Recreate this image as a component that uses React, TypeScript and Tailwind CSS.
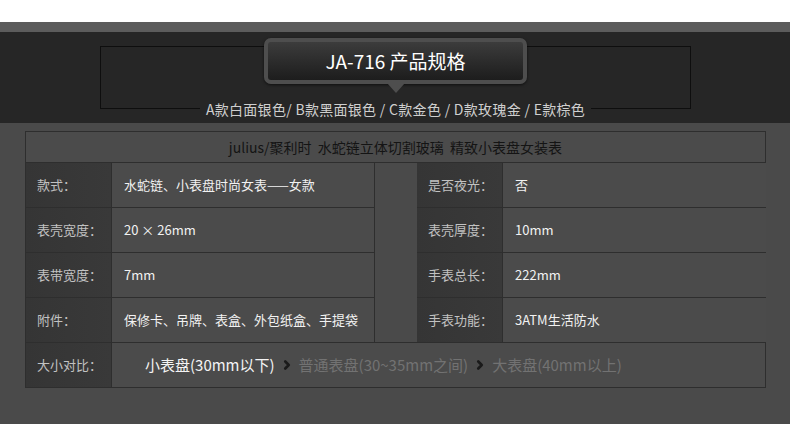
import React from "react";
import { ChevronRight } from "lucide-react";

const rows = [
  ["款式：", "水蛇链、小表盘时尚女表——女款", "是否夜光：", "否"],
  ["表壳宽度：", "20 × 26mm", "表壳厚度：", "10mm"],
  ["表带宽度：", "7mm", "手表总长：", "222mm"],
  ["附件：", "保修卡、吊牌、表盒、外包纸盒、手提袋", "手表功能：", "3ATM生活防水"],
];

function Label({ text }: { text: string }) {
  return (
    <div className="h-[45px] flex items-center pl-[11px] bg-gradient-to-r from-[#353535] to-[#393939] border-b border-r border-[#2e2e2e] text-[13px] text-[#c2c2c2]">
      {text}
    </div>
  );
}

function Value({ text }: { text: string }) {
  return (
    <div className="h-[45px] flex items-center pl-[12px] bg-[#4b4b4b] border-b border-r border-[#2e2e2e] text-[13px] text-[#f2f2f2]">
      {text}
    </div>
  );
}

export default function App() {
  return (
    <div
      className="w-[790px] h-[424px] overflow-hidden bg-white"
      style={{ fontFamily: '"Noto Sans CJK SC", "Noto Sans", sans-serif' }}
    >
      <div className="h-[22px] bg-white" />
      <div className="h-[10px] bg-[#5c5c5c]" />

      {/* 标题区 */}
      <div className="h-[91px] bg-[#262626] pt-[14px]">
        <div className="ml-[100px] w-[591px] border border-[#0e0e0e] flex flex-col items-center">
          <div className="-mt-[9px] flex flex-col items-center">
            <div className="w-[263px] h-[46px] rounded-[7px] border-[4px] border-[#4e4e4e] bg-gradient-to-b from-[#3c3c3c] to-[#1d1d1d] shadow-[0_1px_3px_rgba(0,0,0,0.6)] flex items-center justify-center text-[19px] text-white">
              JA-716 产品规格
            </div>
            <div className="-mt-[1px] w-0 h-0 border-x-[9px] border-x-transparent border-t-[10px] border-t-[#4e4e4e]" />
          </div>
          <div className="mt-[6px] -mb-[11px] h-[20px] leading-[20px] px-[6px] bg-[#262626] text-[14px] tracking-[0.3px] text-[#cfcfcf]">
            A款白面银色/ B款黑面银色 / C款金色 / D款玫瑰金 / E款棕色
          </div>
        </div>
      </div>

      {/* 规格表 */}
      <div className="h-[301px] bg-[#4a4a4a] pt-[8px]">
        <div className="ml-[25px] w-[741px] border-l border-r border-[#2e2e2e]">
          <div className="h-[32px] border-t border-b border-[#2e2e2e] bg-[#4b4b4b] flex items-center justify-center whitespace-pre text-[14px] text-[#141414]">
            {"julius/聚利时  水蛇链立体切割玻璃  精致小表盘女装表"}
          </div>

          <div className="grid grid-cols-[86px_263px_42px_86px_263px]">
            {rows.map((r, i) => (
              <React.Fragment key={r[0]}>
                <Label text={r[0]} />
                <Value text={r[1]} />
                {i === 0 && <div className="row-span-4 bg-[#4a4a4a] border-b border-[#2e2e2e]" />}
                <Label text={r[2]} />
                <div className="h-[45px] flex items-center pl-[12px] bg-[#4b4b4b] border-b border-[#2e2e2e] text-[13px] text-[#f2f2f2]">
                  {r[3]}
                </div>
              </React.Fragment>
            ))}
          </div>

          <div className="grid grid-cols-[86px_1fr] border-b border-[#2e2e2e]">
            <div className="h-[44px] flex items-center pl-[11px] bg-gradient-to-r from-[#353535] to-[#393939] border-r border-[#2e2e2e] text-[13px] text-[#c2c2c2]">
              大小对比：
            </div>
            <div className="h-[44px] flex items-center pl-[33px] bg-[#4b4b4b] text-[15px]">
              <span className="text-[#f4f4f4]">小表盘(30mm以下)</span>
              <ChevronRight size={14} strokeWidth={4.5} className="mx-[5px] text-[#1a1a1a]" />
              <span className="text-[#727272]">普通表盘(30~35mm之间)</span>
              <ChevronRight size={14} strokeWidth={4.5} className="mx-[5px] text-[#1a1a1a]" />
              <span className="text-[#727272]">大表盘(40mm以上)</span>
            </div>
          </div>
        </div>
      </div>
    </div>
  );
}
